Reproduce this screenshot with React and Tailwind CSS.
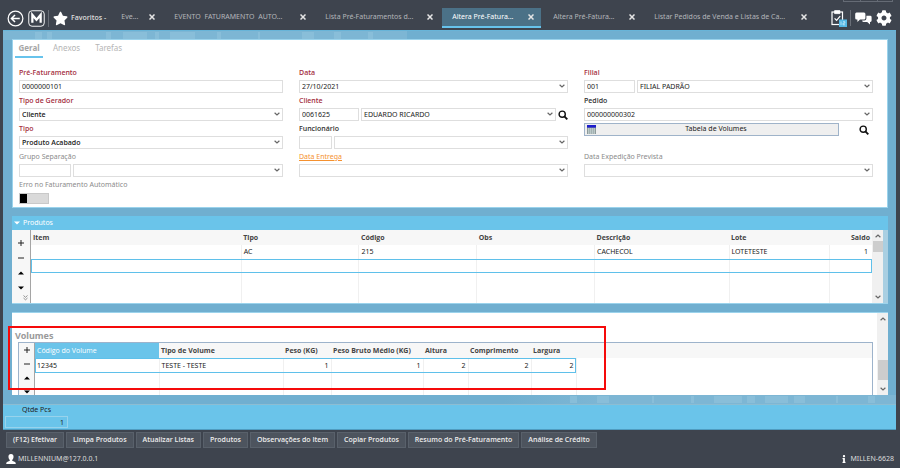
import { useState } from "react";
import { FaStar, FaCog, FaInfo } from "react-icons/fa";

const tabs = [
  { title: "Eve...", width: "w-[51px]" },
  { title: "EVENTO  FATURAMENTO  AUTO...", width: "w-[149px]" },
  { title: "Lista Pré-Faturamentos d...", width: "w-[125px]" },
  { title: "Altera Pré-Fatura...", width: "w-[99px]" },
  { title: "Altera Pré-Fatura...", width: "w-[99px]" },
  { title: "Listar Pedidos de Venda e Listas de Ca...", width: "w-[170px]" },
];

const actions = [
  "(F12) Efetivar",
  "Limpa Produtos",
  "Atualizar Listas",
  "Produtos",
  "Observações do Item",
  "Copiar Produtos",
  "Resumo do Pré-Faturamento",
  "Análise de Crédito",
];

// [gap before, width] of each lighter block in the backdrop
const topBlocks = [[32, 7], [5, 5], [54, 5], [12, 24], [8, 4], [11, 25], [22, 4], [37, 2], [42, 12], [20, 7], [27, 5]];
const bottomBlocks = [[567, 7], [20, 12], [43, 2], [37, 3], [20, 28], [5, 8], [10, 23], [6, 11], [31, 2], [30, 7]];

const inputClass =
  "h-[13px] min-w-0 border border-[#dedede] bg-white px-[2px] text-[7px] leading-[11px] text-[#222] outline-none";

const strong = "font-['Open_Sans',sans-serif] font-semibold";

const Blocks = ({ items, className }) => (
  <div className={`flex h-[9px] items-center overflow-hidden ${className}`} aria-hidden="true">
    {items.map(([gap, width], i) => (
      <span
        key={i}
        className="h-[7px] shrink-0 bg-[#8fc2dc]/70"
        style={{ marginLeft: gap, width }}
      />
    ))}
  </div>
);

const Chevron = ({ up = false, className = "" }) => (
  <svg viewBox="0 0 6 4" className={`h-[4px] w-[6px] ${className}`} fill="none" stroke="#666" strokeWidth="1.2">
    <path d={up ? "M0.6 3.2L3 1L5.4 3.2" : "M0.6 0.8L3 3L5.4 0.8"} />
  </svg>
);

const Combo = ({ id, value = "", label, bold = false }) => (
  <div className="relative min-w-0 flex-1">
    <select
      id={id}
      aria-label={label}
      defaultValue={value}
      className={`${inputClass} block w-full appearance-none ${bold ? strong : ""}`}
    >
      <option value={value}>{value}</option>
    </select>
    <Chevron className="pointer-events-none absolute right-[3px] top-[4px]" />
  </div>
);

const Field = ({ id, label, tone = `text-[#333] ${strong}`, children }) => (
  <div>
    <label htmlFor={id} className={`block h-[13px] text-[7px] leading-[12px] ${tone}`}>
      {label}
    </label>
    <div className="flex gap-[2px]">{children}</div>
  </div>
);

const SearchButton = ({ label }) => (
  <button type="button" aria-label={label} className="flex h-[13px] w-[10px] shrink-0 items-center justify-center">
    <svg viewBox="0 0 10 10" className="size-[10px]" fill="none" stroke="#111">
      <circle cx="4.2" cy="4.2" r="3.1" strokeWidth="1.4" />
      <path d="M6.4 6.4L9.3 9.3" strokeWidth="1.9" />
    </svg>
  </button>
);

const RowTools = ({ more = false, className = "" }) => (
  <div className={`flex shrink-0 flex-col items-center border-r border-[#a5a5a5] bg-[#f7f7f7] text-[#111] ${className}`}>
    {[
      ["Adicionar", "M3 0V6M0 3H6", true],
      ["Remover", "M0 3H6", true],
      ["Subir", "M0 4.5L3 1.5L6 4.5Z", false],
      ["Descer", "M0 1.5L3 4.5L6 1.5Z", false],
    ].map(([label, d, stroked]) => (
      <button
        key={label}
        type="button"
        aria-label={label}
        className={`flex w-full shrink-0 items-center justify-center ${more ? "h-[15px]" : "h-[14px]"}`}
      >
        <svg viewBox="0 0 6 6" className="size-[6px]" fill={stroked ? "none" : "#000"} stroke={stroked ? "#222" : "none"}>
          <path d={d} />
        </svg>
      </button>
    ))}
    {more && (
      <button type="button" aria-label="Mais" className="ml-[8px] flex h-[6px] items-center">
        <svg viewBox="0 0 5 6" className="h-[6px] w-[5px]" fill="none" stroke="#777" strokeWidth="0.8">
          <path d="M0.5 0.5L2.5 2.3L4.5 0.5M0.5 3L2.5 4.8L4.5 3" />
        </svg>
      </button>
    )}
  </div>
);

const Header = ({ active, onSelect }) => (
  <header className="relative flex h-[30px] items-center pl-[7px] pr-[8px] pt-[6px] text-white">
    <div className="absolute right-[7px] top-0 flex h-[2px]" aria-hidden="true">
      <span className="w-[17px] border-b border-l border-[#656b75]" />
      <span className="w-[17px] border-b border-l border-[#656b75]" />
      <span className="w-[16px] border-x border-b border-[#656b75]" />
    </div>
    <button type="button" aria-label="Voltar">
      <svg viewBox="0 0 18 18" className="size-[17px]" fill="none" stroke="#fff" strokeWidth="1.3">
        <circle cx="9" cy="9" r="7.8" />
        <path d="M13.5 9H5M8.5 5.2L4.7 9L8.5 12.8" strokeWidth="1.6" />
      </svg>
    </button>
    <button type="button" aria-label="Millennium" className="ml-[4px]">
      <svg viewBox="0 0 18 18" className="size-[17px]" fill="none" stroke="#fff">
        <rect x="0.8" y="0.8" width="16.4" height="16.4" rx="3.5" strokeWidth="1" />
        <path d="M4.6 13.6V5.2L9 10.4L13.4 5.2V13.6" strokeWidth="2.4" />
      </svg>
    </button>
    <span className="ml-[3px] h-[17px] w-px bg-[#6a6f78]" />
    <button type="button" className={`ml-[4px] flex items-center gap-[3px] whitespace-nowrap text-[7px] text-[#ddd] ${strong}`}>
      <FaStar className="size-[15px] text-white" />
      Favoritos -
    </button>
    <nav className="ml-[5px] flex min-w-0 flex-1 gap-[2px]">
      {tabs.map((tab, i) => (
        <div
          key={i}
          className={`flex h-[20px] shrink-0 items-center justify-between border-b-2 pl-[10px] pr-[7px] text-[7px] ${tab.width} ${
            i === active ? "border-[#67c3ec] bg-[#4b7187] text-white" : "border-transparent text-[#b3b6ba]"
          }`}
        >
          <button type="button" className="whitespace-pre" onClick={() => onSelect(i)}>
            {tab.title}
          </button>
          <button type="button" aria-label={`Fechar ${tab.title}`}>
            <svg viewBox="0 0 6 6" className="size-[6px]" stroke="#e6e6e6" strokeWidth="1.5">
              <path d="M0.5 0.5L5.5 5.5M5.5 0.5L0.5 5.5" />
            </svg>
          </button>
        </div>
      ))}
    </nav>
    <button type="button" aria-label="Tarefas">
      <svg viewBox="0 0 16 18" className="h-[18px] w-[16px]" fill="none" stroke="#fff">
        <rect x="1" y="3" width="10.5" height="12.5" strokeWidth="1.2" />
        <path d="M3.6 1.6H8.9V4.6H3.6Z" fill="#fff" strokeWidth="0.8" />
        <path d="M3.6 9.4L5.6 11.4L9.2 7.2" strokeWidth="1.2" />
        <rect x="8" y="10.5" width="8" height="7.5" fill="#55b9e6" stroke="none" />
        <path d="M10 12.5V16M12 12.7H13.8V14.2H12V15.8H14" stroke="#d8f0fa" strokeWidth="0.7" />
      </svg>
    </button>
    <span className="ml-[3px] h-[16px] w-px bg-[#6a6f78]" />
    <button type="button" aria-label="Mensagens" className="ml-[4px]">
      <svg viewBox="0 0 17 13" className="h-[13px] w-[17px]" fill="#fff">
        <path d="M1.5 0.5H9Q10.4 0.5 10.4 2V6Q10.4 7.5 9 7.5H5L2.4 10V7.5H1.5Q0.2 7.5 0.2 6V2Q0.2 0.5 1.5 0.5Z" />
        <path d="M11.4 3.8H15.3Q16.6 3.8 16.6 5.2V8.6Q16.6 10 15.3 10H15V12.5L12.2 10H8.6Q7.3 10 7.1 8.5H9.5Q11.4 8.5 11.4 6.5Z" />
      </svg>
    </button>
    <button type="button" aria-label="Configurações" className="ml-[4px]">
      <FaCog className="size-[16px]" />
    </button>
  </header>
);

const PreFaturamentoForm = () => {
  const red = `text-[#a5303f] ${strong}`;
  const muted = "text-[#8b8b8b]";

  return (
    <section className="border border-[#9bd3ec] bg-white pb-[3px]">
      <nav className="ml-[2px] flex h-[18px] items-stretch text-[8px] text-[#b5b5b5]">
        <button type="button" className="w-[28px] border-b-2 border-[#67c3ec] font-bold text-[#a5a5a5]">Geral</button>
        <button type="button" className="ml-[10px] border-b-2 border-transparent">Anexos</button>
        <button type="button" className="ml-[15px] border-b-2 border-transparent">Tarefas</button>
      </nav>
      <div className="mt-[9px] grid grid-cols-[264fr_269fr_289fr] gap-x-[16px] gap-y-[2px] pl-[6px] pr-[14px]">
        <Field id="pre" label="Pré-Faturamento" tone={red}>
          <input id="pre" defaultValue="0000000101" className={`${inputClass} flex-1`} />
        </Field>
        <Field id="data" label="Data" tone={red}>
          <Combo id="data" value="27/10/2021" />
        </Field>
        <Field id="filial" label="Filial" tone={red}>
          <input id="filial" defaultValue="001" className={`${inputClass} w-[51px]`} />
          <Combo label="Nome da filial" value="FILIAL PADRÃO" />
        </Field>

        <Field id="gerador" label="Tipo de Gerador" tone={red}>
          <Combo id="gerador" value="Cliente" bold />
        </Field>
        <Field id="cliente" label="Cliente" tone={red}>
          <input id="cliente" defaultValue="0061625" className={`${inputClass} w-[60px]`} />
          <Combo label="Nome do cliente" value="EDUARDO RICARDO" />
          <SearchButton label="Buscar cliente" />
        </Field>
        <Field id="pedido" label="Pedido">
          <Combo id="pedido" value="000000000302" />
        </Field>

        <Field id="tipo" label="Tipo" tone={red}>
          <Combo id="tipo" value="Produto Acabado" bold />
        </Field>
        <Field id="func" label="Funcionário">
          <input id="func" className={`${inputClass} w-[33px]`} />
          <Combo label="Nome do funcionário" />
        </Field>
        <div className="flex items-start justify-between pr-[4px]">
          <button
            type="button"
            className="flex h-[13px] w-[255px] items-center border border-[#9fb3c9] bg-[#efefef] px-[2px] text-[7px] text-[#222]"
          >
            <svg viewBox="0 0 9 9" className="size-[9px]">
              <rect width="9" height="9" fill="#8d9a9a" />
              <rect width="9" height="2.6" fill="#1c1ccc" />
              <path d="M1 4H8M1 6H8M1 8H8" stroke="#e8f5f5" strokeWidth="1.1" strokeDasharray="1.4 0.5" />
            </svg>
            <span className="flex-1">Tabela de Volumes</span>
          </button>
          <SearchButton label="Buscar volumes" />
        </div>

        <Field id="grupo" label="Grupo Separação" tone={muted}>
          <input id="grupo" className={`${inputClass} w-[52px]`} />
          <Combo label="Nome do grupo" />
        </Field>
        <Field id="entrega" label="Data Entrega" tone="text-[#f5912f] underline">
          <Combo id="entrega" />
        </Field>
        <Field id="expedicao" label="Data Expedição Prevista" tone={muted}>
          <Combo id="expedicao" />
        </Field>

        <Field id="erro" label="Erro no Faturamento Automático" tone={muted}>
          <input
            id="erro"
            type="checkbox"
            role="switch"
            className="mt-px h-[11px] w-[30px] appearance-none border border-[#c9c9c9] bg-[linear-gradient(90deg,#000_7px,#dadada_7px)] checked:bg-[linear-gradient(270deg,#000_7px,#dadada_7px)]"
          />
        </Field>
      </div>
    </section>
  );
};

const Produtos = () => {
  const cell = "border-r border-[#f0f0f0] px-[2px]";

  return (
    <section className="mt-[8px]">
      <h2 className="flex h-[14px] items-center gap-[3px] bg-[#6ac4ea] pl-[2px] text-[7px] text-white">
        <svg viewBox="0 0 6 4" className="h-[4px] w-[6px]" fill="#fff">
          <path d="M0 0.5H6L3 3.5Z" />
        </svg>
        Produtos
      </h2>
      <div className="flex h-[74px] border-b border-[#9bd3ec] bg-white">
        <RowTools more className="w-[19px] pt-[5px]" />
        <table className="min-w-0 flex-1 table-fixed border-collapse text-left text-[7px] leading-[10px] text-[#222]">
          <colgroup>
            <col className="w-[25%]" />
            <col className="w-[14%]" />
            <col className="w-[14%]" />
            <col className="w-[14%]" />
            <col className="w-[16%]" />
            <col className="w-[12%]" />
            <col className="w-[5%]" />
          </colgroup>
          <thead>
            <tr className={`h-[15px] bg-[#f7f7f7] text-[#444] ${strong}`}>
              <th className="px-[2px]">Item</th>
              <th className="px-[2px]">Tipo</th>
              <th className="px-[2px]">Código</th>
              <th className="px-[2px]">Obs</th>
              <th className="px-[2px]">Descrição</th>
              <th className="px-[2px]">Lote</th>
              <th className="px-[2px] text-right">Saldo</th>
            </tr>
          </thead>
          <tbody>
            <tr className="h-[14px]">
              <td className={cell}></td>
              <td className={cell}>AC</td>
              <td className={cell}>215</td>
              <td className={cell}></td>
              <td className={cell}>CACHECOL</td>
              <td className={cell}>LOTETESTE</td>
              <td className="px-[4px] text-right">1</td>
            </tr>
            <tr className="h-[14px] outline outline-[#5fc0ea] -outline-offset-1">
              {[0, 1, 2, 3, 4, 5].map((i) => (
                <td key={i} className={cell}></td>
              ))}
              <td></td>
            </tr>
            <tr className="h-[30px]">
              {[0, 1, 2, 3, 4, 5].map((i) => (
                <td key={i} className={cell}></td>
              ))}
              <td></td>
            </tr>
          </tbody>
        </table>
        <div className="flex w-[11px] flex-col items-center bg-[#f0f0f0] py-[4px]">
          <Chevron up />
          <span className="mt-[3px] h-[11px] w-[10px] bg-[#cdcdcd]" />
          <Chevron className="mt-auto" />
        </div>
        <span className="w-[5px] bg-[#a9cfe2]" />
      </div>
    </section>
  );
};

const Volumes = () => {
  const cell = "border-r border-[#f0f0f0] px-[2px]";

  return (
    <section className="relative mt-[8px]">
      <div className="flex h-[83px] overflow-hidden border-t border-[#9bd3ec] bg-white">
        <div className="min-w-0 flex-1 pl-[6px] pr-[4px]">
          <h2 className="-ml-[3px] mt-[17px] h-[12px] text-[9px] font-bold leading-[12px] text-[#9a9a9a]">Volumes</h2>
          <div className="flex border border-[#9db3cb]">
            <RowTools className="w-[16px]" />
            <div className="min-w-0 flex-1 bg-[linear-gradient(#f7f7f7_15px,#fff_15px)]">
              <table className="w-[541px] table-fixed border-collapse text-left text-[7px] leading-[10px] text-[#222]">
                <colgroup>
                  <col className="w-[124px]" />
                  <col className="w-[124px]" />
                  <col className="w-[48px]" />
                  <col className="w-[92px]" />
                  <col className="w-[45px]" />
                  <col className="w-[63px]" />
                  <col className="w-[45px]" />
                </colgroup>
                <thead>
                  <tr className={`h-[15px] text-[#444] ${strong}`}>
                    <th className="bg-[#6ac4ea] px-[2px] font-normal text-white">Código do Volume</th>
                    <th className="px-[2px]">Tipo de Volume</th>
                    <th className="whitespace-nowrap px-[2px]">Peso (KG)</th>
                    <th className="whitespace-nowrap px-[2px]">Peso Bruto Médio (KG)</th>
                    <th className="px-[2px]">Altura</th>
                    <th className="px-[2px]">Comprimento</th>
                    <th className="px-[2px]">Largura</th>
                  </tr>
                </thead>
                <tbody>
                  <tr className="h-[15px] outline outline-[#5fc0ea] -outline-offset-1">
                    <td className={cell}>12345</td>
                    <td className={cell}>TESTE - TESTE</td>
                    <td className={`${cell} text-right`}>1</td>
                    <td className={`${cell} text-right`}>1</td>
                    <td className={`${cell} text-right`}>2</td>
                    <td className={`${cell} text-right`}>2</td>
                    <td className={`${cell} text-right`}>2</td>
                  </tr>
                  <tr className="h-[30px]">
                    {[0, 1, 2, 3, 4, 5, 6].map((i) => (
                      <td key={i} className={cell}></td>
                    ))}
                  </tr>
                </tbody>
              </table>
            </div>
          </div>
        </div>
        <div className="flex w-[11px] flex-col items-center bg-[#f0f0f0] py-[4px]">
          <Chevron up />
          <span className="mt-auto h-[20px] w-[10px] bg-[#cdcdcd]" />
          <Chevron className="mt-[7px]" />
        </div>
      </div>
      {/* highlight over the volumes grid */}
      <div className="pointer-events-none absolute -left-[4px] top-[14px] h-[64px] w-[598px] border-2 border-[#f50a0a]" />
    </section>
  );
};

const App = () => {
  const [active, setActive] = useState(3);

  return (
    <div className="min-h-screen bg-[#3e444e] font-['Noto_Sans','Open_Sans',sans-serif]">
      <Header active={active} onSelect={setActive} />
      <main className="ml-[3px] mr-[4px] border-t border-[#68b4d8] bg-[#70afd0]">
        <Blocks items={topBlocks} className="bg-[linear-gradient(90deg,#7db6d4_404px,#70afd0_404px)]" />
        <div className="-mt-px pl-[9px] pr-[8px]">
          <PreFaturamentoForm />
          <Produtos />
          <Volumes />
        </div>
        <Blocks items={bottomBlocks} className="bg-[linear-gradient(90deg,#70afd0_501px,#7db6d4_597px)]" />
        <div className="h-[26px] border-b border-t border-[#8dbdd2] border-b-[#4f9cc0] bg-[#6ac4ea] pl-[2px] text-[7px] text-[#222]">
          <label htmlFor="qtde" className="ml-[17px] block h-[11px] leading-[10px]">Qtde Pcs</label>
          <input
            id="qtde"
            defaultValue="1"
            className="block h-[12px] w-[63px] border border-[#98d3ec] bg-transparent px-[3px] text-right leading-[10px]"
          />
        </div>
      </main>
      <footer>
        <div className="flex gap-[2px] pl-[6px] pt-[2px]">
          {actions.map((a) => (
            <button
              key={a}
              type="button"
              className={`h-[16px] whitespace-nowrap border border-[#59616b] bg-[#4d545e] px-[6px] text-[7px] text-[#eee] ${strong}`}
            >
              {a}
            </button>
          ))}
        </div>
        <div className="flex h-[20px] items-center justify-between pl-[6px] pr-[6px] pt-[2px] text-[7px] text-[#ddd]">
          <span className="flex items-center gap-[2px]">
            <svg viewBox="0 0 10 10" className="size-[10px]" fill="#fff">
              <path d="M5 0C7 0 7.8 1.4 7.5 3.2C7.3 4.6 6.7 5.4 6.2 5.9V6.8L9 8Q9.8 8.5 9.8 10H0.2Q0.2 8.5 1 8L3.8 6.8V5.9C3.3 5.4 2.7 4.6 2.5 3.2C2.2 1.4 3 0 5 0Z" />
            </svg>
            MILLENNIUM@127.0.0.1
          </span>
          <span className="flex items-center gap-[2px]">
            <FaInfo className="size-[8px] text-white" />
            MILLEN-6628
          </span>
        </div>
      </footer>
    </div>
  );
};

export default App;
